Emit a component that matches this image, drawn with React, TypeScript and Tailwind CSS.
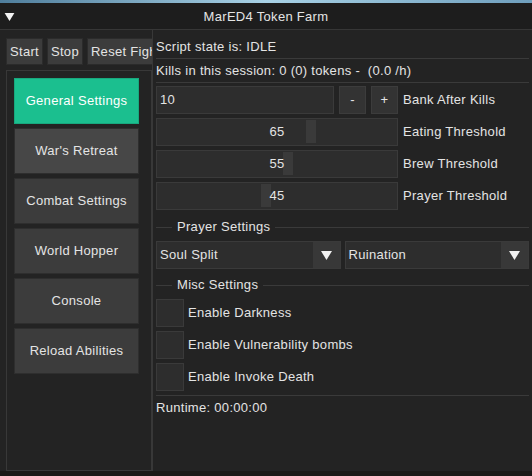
import React from 'react';

const navItems = ['General Settings', "War's Retreat", 'Combat Settings', 'World Hopper', 'Console', 'Reload Abilities'];

const sliders = [
  { label: 'Eating Threshold', value: 65 },
  { label: 'Brew Threshold', value: 55 },
  { label: 'Prayer Threshold', value: 45 },
];

const checks = ['Enable Darkness', 'Enable Vulnerability bombs', 'Enable Invoke Death'];

function DownArrow({ className }: { className?: string }) {
  return (
    <svg viewBox="0 0 11 9" className={className}>
      <path d="M0 0 H11 L5.5 9 Z" fill="#f2f2f2" />
    </svg>
  );
}

function SeparatorText({ text, className }: { text: string; className: string }) {
  return (
    <div className={`flex h-[20px] items-center gap-[4px] ${className}`}>
      <div className="h-px w-[16px] bg-[#3a3a3a]" />
      <span className="whitespace-nowrap px-[1px]">{text}</span>
      <div className="h-px flex-1 bg-[#3a3a3a]" />
    </div>
  );
}

function Combo({ value }: { value: string }) {
  return (
    <div className="flex h-[28px] flex-1 border border-[#3a3a3a] bg-[#2d2d2d]">
      <span className="flex flex-1 items-center pl-[3px]">{value}</span>
      <div className="flex w-[27px] items-center justify-center bg-[#383838]">
        <DownArrow className="h-[9px] w-[11px]" />
      </div>
    </div>
  );
}

export default function App() {
  return (
    <div className="flex h-[476px] w-[532px] flex-col overflow-hidden bg-[#232323] font-['Liberation_Sans',Arial,sans-serif] text-[13px] tracking-[0.3px] text-[#e4e4e4]">
      <div className="h-[3px] bg-gradient-to-r from-[#4f7e9c] via-[#a9d2e6] to-[#6f9fbd]" />

      {/* title bar */}
      <div className="flex h-[26px] items-center bg-[#1d1d1d] pt-[1px]">
        <div className="flex w-[40px] pl-[4px]">
          <DownArrow className="h-[8px] w-[11px]" />
        </div>
        <div className="flex-1 text-center">MarED4 Token Farm</div>
        <div className="w-[40px]" />
      </div>
      <div className="h-px bg-[#363636]" />

      <div className="flex flex-1">
        {/* left column */}
        <div className="flex w-[152px] flex-col pl-[6px] pt-[8px]">
          <div className="flex h-[27px] gap-[4px] overflow-hidden pr-[1px]">
            <button className="shrink-0 whitespace-nowrap border border-[#2b2b2b] bg-[#3c3c3c] px-[3px]">Start</button>
            <button className="shrink-0 whitespace-nowrap border border-[#2b2b2b] bg-[#3c3c3c] px-[3px]">Stop</button>
            <button className="shrink-0 whitespace-nowrap border border-[#2b2b2b] bg-[#3c3c3c] px-[3px]">Reset Fight</button>
          </div>
          <div className="mt-[5px] flex h-[401px] flex-col gap-[4px] border border-[#383838] pl-[7px] pt-[7px]">
            {navItems.map((item, i) => (
              <button
                key={item}
                className={
                  i === 0
                    ? 'h-[46px] w-[125px] border border-[#18a87e] bg-[#1bbf8f] text-white'
                    : i === 1
                      ? 'h-[46px] w-[125px] border border-[#2e2e2e] bg-[#474747]'
                      : 'h-[46px] w-[125px] border border-[#2e2e2e] bg-[#3c3c3c]'
                }
              >
                {item}
              </button>
            ))}
          </div>
        </div>

        <div className="w-px bg-[#383838]" />

        {/* right column */}
        <div className="flex flex-1 flex-col pl-[3px] pr-[3px] pt-[7px]">
          <div className="flex h-[20px] items-center">Script state is: IDLE</div>
          <div className="mt-[1px] h-px bg-[#3a3a3a]" />
          <div className="flex h-[23px] items-center whitespace-pre">Kills in this session: 0 (0) tokens -  (0.0 /h)</div>
          <div className="h-px bg-[#3a3a3a]" />

          <div className="mt-[3px] flex h-[28px] items-center gap-[5px]">
            <div className="flex h-full w-[178px] items-center border border-[#3a3a3a] bg-[#2d2d2d] pl-[3px]">10</div>
            <button className="h-full w-[27px] border border-[#3c3c3c] bg-[#333333]">-</button>
            <button className="h-full w-[27px] border border-[#3c3c3c] bg-[#333333]">+</button>
            <span className="whitespace-nowrap">Bank After Kills</span>
          </div>

          {sliders.map((s) => (
            <div key={s.label} className="mt-[4px] flex h-[28px] items-center gap-[5px]">
              <div className="relative flex h-full w-[242px] items-center justify-center border border-[#3a3a3a] bg-[#2d2d2d]">
                <div
                  className="absolute top-[1px] h-[23px] w-[10px] bg-[#3a3a3a]"
                  style={{ left: 2 + (s.value / 100) * 226 }}
                />
                <span className="relative">{s.value}</span>
              </div>
              <span className="whitespace-nowrap">{s.label}</span>
            </div>
          ))}

          <SeparatorText text="Prayer Settings" className="mt-[7px]" />
          <div className="mt-[4px] flex gap-[4px]">
            <Combo value="Soul Split" />
            <Combo value="Ruination" />
          </div>

          <SeparatorText text="Misc Settings" className="mt-[6px]" />
          <div className="mt-[4px] flex flex-col gap-[4px]">
            {checks.map((c) => (
              <div key={c} className="flex h-[28px] items-center gap-[4px]">
                <div className="h-[28px] w-[28px] border border-[#3a3a3a] bg-[#2d2d2d]" />
                <span className="whitespace-nowrap">{c}</span>
              </div>
            ))}
          </div>
          <div className="mt-[4px] h-px bg-[#3a3a3a]" />
          <div className="flex h-[24px] items-center">Runtime: 00:00:00</div>
        </div>
      </div>
      <div className="h-[5px] bg-[#1b1a17]" />
    </div>
  );
}
